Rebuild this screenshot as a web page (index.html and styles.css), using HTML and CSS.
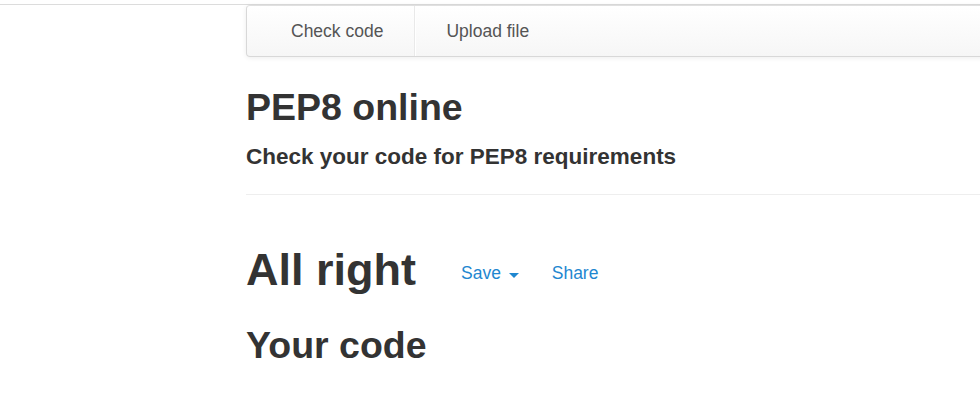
FILE: index.html
```html
<!DOCTYPE html>
<html>
<head>
<meta charset="utf-8">
<link rel="stylesheet" href="styles.css">
</head>
<body>
<div class="topline"></div>
<div class="container">
  <nav class="navbar">
    <a class="nav-link first" href="#">Check code</a>
    <span class="divider"></span>
    <a class="nav-link second" href="#">Upload file</a>
  </nav>
  <h2 class="title">PEP8 online</h2>
  <h4 class="subtitle">Check your code for PEP8 requirements</h4>
  <hr class="rule">
  <div class="result">
    <h1 class="result-title">All right</h1>
    <a class="action save" href="#">Save <span class="caret"></span></a>
    <a class="action share" href="#">Share</a>
  </div>
  <h2 class="code-title">Your code</h2>
</div>
</body>
</html>
```
FILE: styles.css
```css
html, body {
  margin: 0;
  padding: 0;
  overflow: hidden;
  background: #fff;
}
body {
  padding-top: 4px;
  font-family: "Liberation Sans", Arial, Helvetica, sans-serif;
  color: #333;
}
.topline {
  height: 0;
  border-top: 1px solid #dcdcdc;
}
.container {
  margin-left: 246px;
  width: 1000px;
}
.navbar {
  display: flex;
  align-items: stretch;
  height: 52px;
  box-sizing: border-box;
  border: 1px solid #d8d8d8;
  border-top-color: #e0e0e0;
  border-radius: 4px;
  background: linear-gradient(to bottom, #ffffff 0%, #f6f6f6 100%);
  box-shadow: inset 0 1px 0 rgba(255,255,255,.15), 0 1px 5px rgba(0,0,0,.075);
}
.nav-link {
  display: flex;
  align-items: center;
  font-size: 17.5px;
  color: #555;
  text-decoration: none;
  line-height: 20px;
}
.nav-link.first {
  padding: 0 31px 0 44px;
}
.nav-link.second {
  padding: 0 31px 0 31px;
}
.divider {
  width: 1px;
  background: #e9e9e9;
  box-shadow: 1px 0 0 #fff;
}
.title {
  margin: 30px 0 0;
  font-size: 37.5px;
  line-height: 1.1;
  font-weight: bold;
}
.subtitle {
  margin: 17px 0 0;
  font-size: 22.5px;
  line-height: 1.1;
  font-weight: bold;
}
.rule {
  margin: 24px 0 0;
  border: 0;
  border-top: 1px solid #eee;
  height: 0;
}
.result {
  display: flex;
  align-items: flex-start;
  margin-top: 50px;
}
.result-title {
  margin: 0;
  font-size: 45px;
  line-height: 1.1;
  font-weight: bold;
}
.action {
  margin-top: 16px;
  font-size: 17.5px;
  line-height: 25px;
  color: #1f87d0;
  text-decoration: none;
}
.save {
  margin-left: 45px;
}
.share {
  margin-left: 33px;
}
.caret {
  display: inline-block;
  width: 0;
  height: 0;
  margin-left: 3px;
  vertical-align: 1px;
  border-top: 5px solid #1f87d0;
  border-left: 5px solid transparent;
  border-right: 5px solid transparent;
}
.code-title {
  margin: 30px 0 0;
  font-size: 37.5px;
  line-height: 1.1;
  font-weight: bold;
}
```
